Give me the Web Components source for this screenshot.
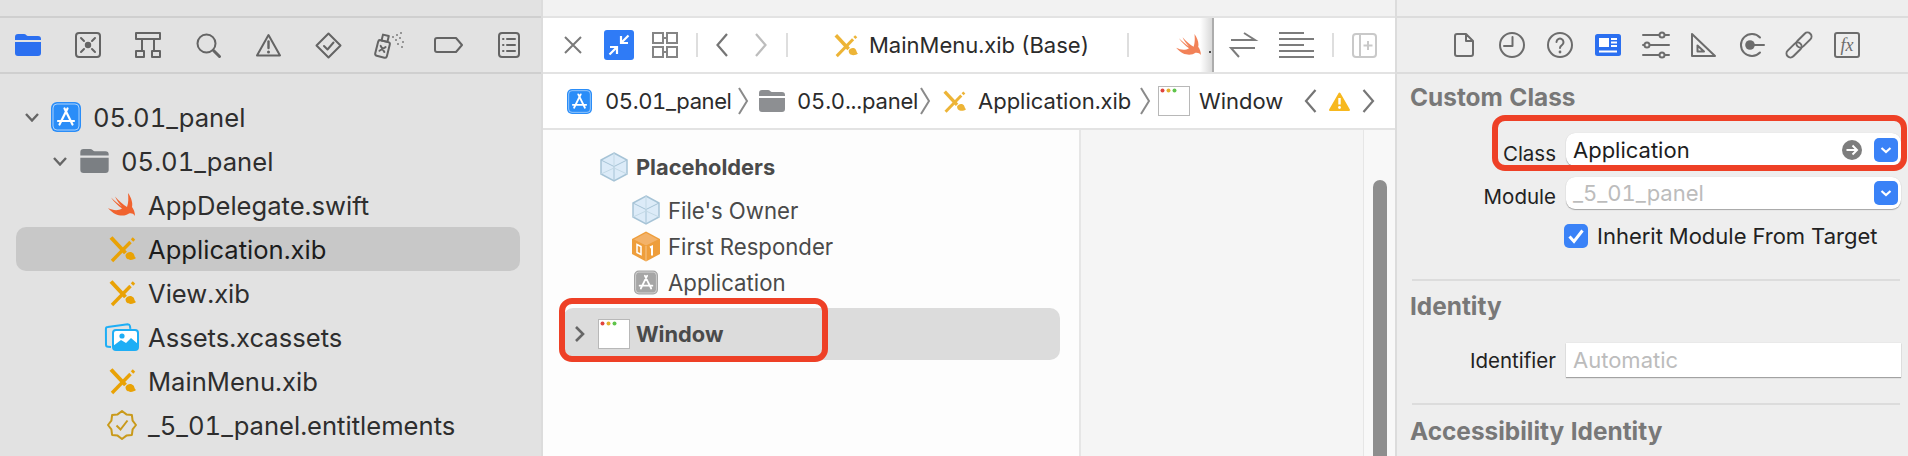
<!DOCTYPE html>
<html>
<head>
<meta charset="utf-8">
<title>Xcode</title>
<style>
  html, body { margin: 0; height: 456px; overflow: hidden; }
  body { display: flex; width: 1908px; font-family: Inter, "Liberation Sans", sans-serif; font-variant-numeric: tabular-nums; }
</style>
</head>
<body>
<xc-navigator>
  <xc-toolbar bg="#e2e2e2" line="#cfcfcf" columns="60.1" start="-2" style="color:#646464">
    <xc-icon name="folder"></xc-icon>
    <xc-icon name="symbols"></xc-icon>
    <xc-icon name="hierarchy"></xc-icon>
    <xc-icon name="search"></xc-icon>
    <xc-icon name="warning"></xc-icon>
    <xc-icon name="diamond"></xc-icon>
    <xc-icon name="spray"></xc-icon>
    <xc-icon name="label"></xc-icon>
    <xc-icon name="report"></xc-icon>
  </xc-toolbar>
  <xc-tree-row indent="9" box="30" gap="12" chevron="down"><xc-icon slot="icon" name="app"></xc-icon>05.01_panel</xc-tree-row>
  <xc-tree-row indent="37" box="30" gap="12" chevron="down"><xc-icon slot="icon" name="folder" w="29" h="24" color="#7b7f83"></xc-icon>05.01_panel</xc-tree-row>
  <xc-tree-row indent="92" box="28" gap="12"><xc-icon slot="icon" name="swift"></xc-icon>AppDelegate.swift</xc-tree-row>
  <xc-tree-row indent="92" box="28" gap="12" selected><xc-icon slot="icon" name="xib"></xc-icon>Application.xib</xc-tree-row>
  <xc-tree-row indent="92" box="28" gap="12"><xc-icon slot="icon" name="xib"></xc-icon>View.xib</xc-tree-row>
  <xc-tree-row indent="89" box="34" gap="9"><xc-icon slot="icon" name="assets"></xc-icon>Assets.xcassets</xc-tree-row>
  <xc-tree-row indent="92" box="28" gap="12"><xc-icon slot="icon" name="xib"></xc-icon>MainMenu.xib</xc-tree-row>
  <xc-tree-row indent="92" box="28" gap="12"><xc-icon slot="icon" name="badge"></xc-icon>_5_01_panel.entitlements</xc-tree-row>
</xc-navigator>

<xc-editor>
  <xc-toolbar bg="#fff" line="#e3e3e3">
    <xc-tab-strip>
      <xc-icon name="close" style="margin-left:21px"></xc-icon>
      <xc-icon name="collapse" style="margin-left:22px"></xc-icon>
      <xc-icon name="grid" style="margin-left:18px"></xc-icon>
      <xc-divider style="margin-left:18px"></xc-divider>
      <xc-icon name="back" style="margin-left:18px"></xc-icon>
      <xc-icon name="forward" style="margin-left:27px"></xc-icon>
      <xc-divider style="margin-left:19px"></xc-divider>
      <xc-icon name="xib" w="24" h="23" style="margin-left:46px;opacity:.8"></xc-icon>
      <span style="margin-left:11px">MainMenu.xib (Base)</span>
      <xc-divider style="margin-left:auto"></xc-divider>
      <xc-icon name="swift" w="26" h="22" style="margin-left:47px;opacity:.8"></xc-icon>
      <span style="width:2px;height:2px;margin:14px 1px 0 7px;background:#555"></span>
    </xc-tab-strip>
    <xc-icon name="swap" style="margin-left:16px"></xc-icon>
    <xc-icon name="lines" style="margin-left:23px"></xc-icon>
    <xc-divider style="margin-left:18px"></xc-divider>
    <xc-icon name="addpanel" style="margin-left:18px"></xc-icon>
  </xc-toolbar>
  <xc-jump-bar>
    <xc-icon name="app" w="25" h="25" style="margin-left:24px"></xc-icon>
    <span style="margin-left:13px;width:125px;letter-spacing:-.4px">05.01_panel</span>
    <xc-icon name="crumb" style="margin-left:8px"></xc-icon>
    <xc-icon name="folder" w="26" h="22" color="#8d8f92" style="margin-left:11px"></xc-icon>
    <span style="margin-left:12px;width:120px;letter-spacing:-.2px">05.0...panel</span>
    <xc-icon name="crumb" style="margin-left:3px"></xc-icon>
    <xc-icon name="xib" w="23" h="23" style="margin-left:13px;opacity:.8"></xc-icon>
    <span style="margin-left:12px;width:155px">Application.xib</span>
    <xc-icon name="crumb" style="margin-left:7px"></xc-icon>
    <xc-icon name="window" style="margin-left:8px"></xc-icon>
    <span style="margin-left:9px;width:82px">Window</span>
    <xc-icon name="back" w="13" h="24" style="margin-left:23px"></xc-icon>
    <xc-icon name="alert" style="margin-left:12px"></xc-icon>
    <xc-icon name="forward" w="13" h="24" color="#777" style="margin-left:12px"></xc-icon>
  </xc-jump-bar>
  <xc-outline>
    <xc-tree-row indent="37" box="28" gap="8" height="44" size="21.8" strong tone="#4a4a4a"><xc-icon slot="icon" name="cube"></xc-icon>Placeholders</xc-tree-row>
    <xc-tree-row indent="69" box="28" gap="8" height="36" size="22.2" tone="#4a4a4a" style="margin-top:3px"><xc-icon slot="icon" name="cube"></xc-icon>File's Owner</xc-tree-row>
    <xc-tree-row indent="69" box="28" gap="8" height="36" size="22.2" tone="#4a4a4a"><xc-icon slot="icon" name="cube1"></xc-icon>First Responder</xc-tree-row>
    <xc-tree-row indent="69" box="28" gap="8" height="36" size="22.2" tone="#4a4a4a"><xc-icon slot="icon" name="app" w="24" h="25" color="#a6a6a6"></xc-icon>Application</xc-tree-row>
    <xc-tree-row indent="11" box="32" gap="6" height="52" size="21.8" strong tone="#4a4a4a" hover chevron="right" style="margin-top:8px"><xc-icon slot="icon" name="window"></xc-icon>Window</xc-tree-row>
    <xc-highlight left="16" top="168" width="269" height="64"></xc-highlight>
  </xc-outline>
</xc-editor>

<xc-inspector>
  <xc-toolbar bg="#eee" line="#dcdcdc" columns="47.9" start="43" style="color:#6c6c6c">
    <xc-icon name="file"></xc-icon>
    <xc-icon name="clock"></xc-icon>
    <xc-icon name="help"></xc-icon>
    <xc-icon name="identity"></xc-icon>
    <xc-icon name="sliders"></xc-icon>
    <xc-icon name="ruler"></xc-icon>
    <xc-icon name="connect"></xc-icon>
    <xc-icon name="link"></xc-icon>
    <xc-icon name="fx"></xc-icon>
  </xc-toolbar>
  <xc-section heading="Custom Class" head="46" top="13" bottom="31">
    <xc-field label="Class" value="Application" height="33" offset="7">
      <xc-icon name="goto" style="margin-right:12px"></xc-icon>
      <xc-icon name="popup"></xc-icon>
    </xc-field>
    <xc-field label="Module" value="_5_01_panel" height="32" offset="7" muted style="margin-top:11px">
      <xc-icon name="popup"></xc-icon>
    </xc-field>
    <xc-check style="margin-top:15px">Inherit Module From Target</xc-check>
  </xc-section>
  <xc-section heading="Identity" head="50" top="12" bottom="26">
    <xc-field label="Identifier" value="Automatic" height="34" muted square></xc-field>
  </xc-section>
  <xc-section heading="Accessibility Identity" head="52" top="0" bottom="0"></xc-section>
  <xc-highlight left="95" top="115" width="415" height="56"></xc-highlight>
</xc-inspector>

<script>
var stroke = (body, width) => `<g fill="none" stroke="currentColor" stroke-width="${width || 2}" stroke-linecap="round" stroke-linejoin="round">${body}</g>`
var appMark = `<g fill="none" stroke="#fff" stroke-width="2.2" stroke-linecap="round"><path d="M13.5 6.5l8 16M16.5 6.5l-8 16M7 19h16"/></g>`

// scalloped seal used by the entitlements file
function sealPoints() {
  var pts = []
  for (var i = 0; i < 16; i++) {
    var r = i % 2 ? 11.5 : 14
    var a = Math.PI * i / 8 - Math.PI / 2
    pts.push((14 + r * Math.cos(a)).toFixed(1) + ',' + (15 + r * Math.sin(a)).toFixed(1))
  }
  return pts.join(' ')
}

var ICONS = {
  folder: [26, 22, '#2b6ff0', `<path fill="currentColor" d="M0 3a3 3 0 0 1 3-3h6c2 0 2.5 2 4 2h10a3 3 0 0 1 3 3v1H0zM0 8h26v11a3 3 0 0 1-3 3H3a3 3 0 0 1-3-3z"/>`],
  symbols: [26, 26, '', stroke(`<rect x="1" y="1" width="24" height="24" rx="3"/><path d="M6 6l3 3M20 6l-3 3M6 20l3-3M20 20l-3-3"/>`) + `<circle cx="13" cy="13" r="3.2" fill="currentColor"/>`],
  hierarchy: [26, 26, '', stroke(`<rect x="1" y="1" width="24" height="6"/><path d="M7 7v12M19 7v12"/><rect x="1" y="19" width="8" height="6"/><rect x="17" y="19" width="8" height="6"/>`)],
  search: [25, 25, '', stroke(`<circle cx="10.5" cy="10.5" r="9"/>`) + stroke(`<path d="M17.5 17.5l6 6"/>`, 3)],
  warning: [25, 24, '', stroke(`<path d="M12.5 2L24 22.5H1z"/>`) + stroke(`<path d="M12.5 8.5v6.5"/>`, 2.4) + `<circle cx="12.5" cy="19" r="1.5" fill="currentColor"/>`],
  diamond: [27, 27, '', stroke(`<path d="M13.5 1.5l12 12-12 12-12-12zM9 14l3.5 3.5 6-7"/>`)],
  spray: [30, 27, '', `<g transform="rotate(14 9 15)">` + stroke(`<rect x="3" y="9" width="12" height="16" rx="2"/><rect x="6" y="3" width="6" height="6"/><path d="M6.5 14.5l5 5M11.5 14.5l-5 5"/>`) + `</g><g fill="currentColor" opacity=".8"><circle cx="19" cy="5" r="1"/><circle cx="23" cy="3" r="1"/><circle cx="27" cy="1" r="1"/><circle cx="22" cy="8" r="1"/><circle cx="26" cy="6" r="1"/><circle cx="29" cy="10" r="1"/><circle cx="24" cy="12" r="1"/><circle cx="28" cy="15" r="1"/></g>`],
  label: [29, 16, '', stroke(`<path d="M3 1h19l6 7-6 7H3a2 2 0 0 1-2-2V3a2 2 0 0 1 2-2z"/>`)],
  report: [22, 26, '', stroke(`<rect x="1" y="1" width="20" height="24" rx="3"/><path d="M9 7h8M9 13h8M9 19h8M5 7h.5M5 13h.5M5 19h.5"/>`)],
  app: [30, 30, '#2a8df8', `<rect width="30" height="30" rx="6" fill="currentColor"/><rect x="2" y="2" width="26" height="26" rx="4" fill="none" stroke="#fff" stroke-opacity=".6"/>` + appMark],
  swift: [28, 24, '', `<path fill="#f0632f" d="M20 0c3.500 5 5 10 4 14 1.500 2 3 5 3 9-1.500-2.500-4-3-6-2.500C17 23.500 8 24.500 0 15c5 2.500 10 3 14 .5-4-3-8-6.500-11-11 4 4 8 7 11 9-3-3-5.500-6.500-7-10 4 4.500 8 8 12 10.500 1.500-4 1.500-9 1-14z"/>`],
  xib: [27, 26, '', `<path d="M2 1.500l14.500 15.500" stroke="#e9a205" stroke-width="4" fill="none"/><path fill="#e9a205" d="M16.500 19c1.500-3.500 6-4 8-1.500 1 1.300.8 3.500 2.500 4.500-2.500 2.500-10.500 3.500-10.500-3z"/><path d="M3 25L21.500 6" stroke="#e9a205" stroke-width="3.400" fill="none"/><path d="M23 4.500l2-2" stroke="#e9a205" stroke-width="3.400"/>`],
  assets: [34, 28, '', `<g fill="none" stroke="#1eaef5" stroke-width="2"><path d="M6 24l-3-.2c-1.200 0-2-1-2-2L.9 6c0-1 .6-1.800 1.800-1.900l20-2.900c1.200 0 2 .6 2.200 1.700l.5 3"/></g><rect x="8" y="7" width="25" height="20" rx="3" fill="#fff" stroke="#1eaef5" stroke-width="2"/><path fill="#1eaef5" d="M8 23l8-6 5 3 5-5 7 6v3a3 3 0 0 1-3 3H11a3 3 0 0 1-3-3z"/><circle cx="17" cy="13" r="2.600" fill="#1eaef5"/>`],
  badge: [28, 30, '', `<polygon points="${sealPoints()}" fill="none" stroke="#c99a1b" stroke-width="2" stroke-linejoin="round"/><path d="M8.500 15.500l4 4 7-9" fill="none" stroke="#c99a1b" stroke-width="2"/>`],
  close: [18, 18, '', `<path d="M1 1l16 16M17 1L1 17" stroke="#7a7a7a" stroke-width="2"/>`],
  collapse: [30, 30, '', `<rect width="30" height="30" rx="3" fill="#2f7bf6"/><g fill="none" stroke="#fff" stroke-width="2.200"><path d="M17 6v7h7M24.500 5.500L17 13M13 24v-7H6M5.500 24.500L13 17"/></g>`],
  grid: [26, 26, '', `<g fill="none" stroke="#858585" stroke-width="2"><rect x="1" y="1" width="10" height="10"/><rect x="15" y="1" width="10" height="10"/><rect x="1" y="15" width="10" height="10"/><rect x="15" y="15" width="10" height="10"/><path d="M11 6h4M11 20h4"/></g>`],
  back: [12, 24, '', `<path d="M11 1L1.500 12l9.500 11" fill="none" stroke="#757575" stroke-width="2.200"/>`],
  forward: [12, 24, '#bdbdbd', `<path d="M1 1l9.500 11L1 23" fill="none" stroke="currentColor" stroke-width="2.200"/>`],
  swap: [26, 26, '', `<path d="M1 8h24L14 1M25 16H1l8 9" fill="none" stroke="#7c7c7c" stroke-width="2"/>`],
  lines: [35, 26, '', `<path d="M0 1h25M0 7h35M0 13h25M0 19h35M0 25h35" stroke="#7c7c7c" stroke-width="2"/>`],
  addpanel: [25, 25, '', `<g fill="none" stroke="#c9c9c9" stroke-width="2"><rect x="1" y="1" width="23" height="23" rx="3"/><path d="M8 1v23M16 8v9M11.500 12.500h9"/></g>`],
  crumb: [10, 28, '', `<path d="M1 1l8 13-8 13" fill="none" stroke="#8a8a8a" stroke-width="2"/>`],
  window: [32, 30, '', `<rect x=".5" y=".5" width="31" height="29" fill="#fff" stroke="#b8b8b8"/><circle cx="4.500" cy="4.500" r="2" fill="#e0443e"/><circle cx="10.500" cy="4.500" r="2" fill="#e2b22e"/><circle cx="16.500" cy="4.500" r="2" fill="#5fc44b"/>`],
  alert: [21, 19, '', `<path fill="#f7b81e" stroke="#f7b81e" stroke-width="2" stroke-linejoin="round" d="M10.500 1.500L20 18H1z"/><path d="M10.500 6v6.500" stroke="#fff" stroke-width="2.400"/><circle cx="10.500" cy="15.500" r="1.400" fill="#fff"/>`],
  cube: [28, 30, '', `<path d="M14 1l13 7v14l-13 7-13-7V8z" fill="#dcebf8" stroke="#a6c3d6" stroke-width="1.500"/><path d="M1 8l13 6.500L27 8M14 14.500V29" fill="none" stroke="#a6c3d6" stroke-width="1"/><path d="M1 22l13-6 13 6M14 1v15" fill="none" stroke="#c3d9e6" stroke-width="1"/>`],
  cube1: [28, 31, '', `<path d="M14 .5l14 7.500v15l-14 7.500L0 23V8z" fill="#ee9e3c"/><path d="M14 2l12 6.500-12 6-12-6z" fill="#f3b269"/><path d="M14 15v15" stroke="#f6c48a"/><path d="M5 13.500l4 2v8l-4-2z" fill="none" stroke="#fff" stroke-width="1.500"/><path d="M18 16.500l2-1v9" fill="none" stroke="#fff" stroke-width="2"/>`],
  file: [20, 24, '', stroke(`<path d="M3 1h9l7 7v13a2 2 0 0 1-2 2H3a2 2 0 0 1-2-2V3a2 2 0 0 1 2-2zM12 1v7h7"/>`)],
  clock: [26, 26, '', stroke(`<circle cx="13" cy="13" r="12"/><path d="M13.500 5v9H5"/>`)],
  help: [26, 26, '', stroke(`<circle cx="13" cy="13" r="12"/><path d="M9.500 10a3.500 3.500 0 1 1 5.500 3c-1.200.9-2 1.500-2 3"/>`) + `<circle cx="13" cy="20" r="1.400" fill="currentColor"/>`],
  identity: [26, 22, '', `<rect width="26" height="22" rx="2.500" fill="#2b6ff0"/><rect x="4" y="4" width="10" height="9" fill="#fff"/><path d="M16 5h6M16 8.500h6M16 12h6M4 17.500h18" stroke="#fff" stroke-width="2"/>`],
  sliders: [26, 24, '', stroke(`<path d="M0 2h26M0 12h26M0 22h26"/>`) + `<g fill="#eee" stroke="currentColor" stroke-width="2"><circle cx="19" cy="2" r="2.500"/><circle cx="4" cy="12" r="2.500"/><circle cx="19" cy="22" r="2.500"/></g>`],
  ruler: [25, 24, '', stroke(`<path d="M1 1v22h23zM6.500 12.500v6h6.500z"/>`)],
  connect: [26, 24, '', stroke(`<path d="M22 4.500a11 11 0 1 0 0 15M12 12h14"/>`) + `<circle cx="12" cy="12" r="4.800" fill="currentColor"/>`],
  link: [26, 26, '', stroke(`<g transform="rotate(-45 13 13)"><rect x="-3" y="9" width="18" height="8" rx="4"/><rect x="11" y="9" width="18" height="8" rx="4"/></g>`)],
  fx: [26, 26, '', stroke(`<rect x="1" y="1" width="24" height="24" rx="2"/>`) + `<text x="13" y="19" text-anchor="middle" font-family="Liberation Serif" font-style="italic" font-size="18" fill="currentColor">fx</text>`],
  goto: [20, 20, '', `<circle cx="10" cy="10" r="10" fill="#7d7d7d"/><path d="M4.500 10h10M10.500 5.500l4.500 4.500-4.500 4.500" fill="none" stroke="#fff" stroke-width="2"/>`],
  popup: [24, 24, '', `<rect width="24" height="24" rx="5" fill="#3a82f7"/><path d="M7.500 10l4.500 4 4.500-4" fill="none" stroke="#fff" stroke-width="2.200"/>`]
}

class XcIcon extends HTMLElement {
  constructor() {
    super()
    this.attachShadow({ mode: 'open' })
  }
  connectedCallback() {
    var icon = ICONS[this.getAttribute('name')]
    var w = this.getAttribute('w') || icon[0]
    var h = this.getAttribute('h') || icon[1]
    var color = this.getAttribute('color') || icon[2]
    this.shadowRoot.innerHTML = `
      <style>
        :host { display: block; flex: none; line-height: 0; ${color ? 'color:' + color + ';' : ''} }
        svg { display: block; overflow: visible; }
      </style>
      <svg width="${w}" height="${h}" viewBox="0 0 ${icon[0]} ${icon[1]}">${icon[3]}</svg>`
  }
}

class XcToolbar extends HTMLElement {
  constructor() {
    super()
    this.attachShadow({ mode: 'open' })
  }
  connectedCallback() {
    var columns = this.getAttribute('columns')
    var layout = columns
      ? `display: grid; grid-template-columns: repeat(9, ${columns}px); justify-items: center; align-items: center; margin-left: ${this.getAttribute('start')}px;`
      : 'display: flex; align-items: center;'
    this.shadowRoot.innerHTML = `
      <style>
        :host { display: block; flex: none; background: ${this.getAttribute('bg')}; }
        .strip { height: 16px; }
        .bar { ${layout} height: 54px; }
        .wrap { border-top: 2px solid ${this.getAttribute('line')}; border-bottom: 2px solid ${this.getAttribute('line')}; overflow: hidden; }
      </style>
      <div class="strip" style="background:${this.getAttribute('bg') === '#fff' ? '#f2f2f2' : 'transparent'}"></div>
      <div class="wrap"><div class="bar"><slot></slot></div></div>`
  }
}

class XcDivider extends HTMLElement {
  constructor() {
    super()
    this.attachShadow({ mode: 'open' }).innerHTML = `
      <style>:host { display: block; flex: none; width: 2px; height: 24px; background: #dedede; }</style>`
  }
}

class XcTabStrip extends HTMLElement {
  constructor() {
    super()
    this.attachShadow({ mode: 'open' }).innerHTML = `
      <style>
        :host {
          display: flex; align-items: center; flex: none; position: relative;
          box-sizing: border-box; width: 671px; height: 54px;
          border-right: 2px solid #adadad;
          font-size: 22px; color: #2b2b2b;
        }
        :host::after {
          content: ''; position: absolute; right: 0; top: 0; bottom: 0; width: 12px;
          background: linear-gradient(to right, rgba(0,0,0,0), rgba(0,0,0,.15));
        }
      </style>
      <slot></slot>`
  }
}

class XcJumpBar extends HTMLElement {
  constructor() {
    super()
    this.attachShadow({ mode: 'open' }).innerHTML = `
      <style>
        :host {
          display: flex; align-items: center; flex: none; height: 54px;
          border-bottom: 2px solid #e3e3e3; background: #fff;
          font-size: 22px; color: #2b2b2b; white-space: nowrap;
        }
      </style>
      <slot></slot>`
  }
}

class XcTreeRow extends HTMLElement {
  constructor() {
    super()
    this.attachShadow({ mode: 'open' })
  }
  connectedCallback() {
    var indent = this.getAttribute('indent')
    var chevron = this.getAttribute('chevron')
    var chev = ''
    if (chevron === 'down') chev = `<svg class="chev" width="14" height="9" viewBox="0 0 14 9"><path d="M1 1l6 6.500L13 1" fill="none" stroke="#666" stroke-width="2.400"/></svg>`
    if (chevron === 'right') chev = `<svg class="chev" width="12" height="16" viewBox="0 0 12 16"><path d="M2 1l7 7-7 7" fill="none" stroke="#666" stroke-width="2.600"/></svg>`
    this.shadowRoot.innerHTML = `
      <style>
        :host {
          display: flex; align-items: center; flex: none;
          height: ${this.getAttribute('height') || 44}px;
          padding-left: ${indent}px; border-radius: 10px;
          font-size: ${this.getAttribute('size') || 25.6}px;
          font-weight: ${this.hasAttribute('strong') ? 700 : 400};
          color: ${this.getAttribute('tone') || '#2e2e2e'};
          white-space: nowrap;
        }
        :host([selected]) { background: #c8c8c8; color: #1c1c1c; }
        :host([hover]) { background: #dcdcdc; }
        .chev { flex: none; margin-right: 12px; }
        .box {
          display: flex; align-items: center; justify-content: center; flex: none;
          width: ${this.getAttribute('box')}px; margin-right: ${this.getAttribute('gap')}px;
        }
      </style>
      ${chev}
      <div class="box"><slot name="icon"></slot></div>
      <slot></slot>`
  }
}

class XcNavigator extends HTMLElement {
  constructor() {
    super()
    this.attachShadow({ mode: 'open' }).innerHTML = `
      <style>
        :host {
          display: flex; flex-direction: column; flex: none;
          width: 541px; height: 456px; overflow: hidden; background: #e2e2e2;
        }
        ::slotted(xc-toolbar) { margin-bottom: 21px; }
        ::slotted(xc-tree-row) { margin: 0 21px 0 16px; }
      </style>
      <slot></slot>`
  }
}

class XcEditor extends HTMLElement {
  constructor() {
    super()
    this.attachShadow({ mode: 'open' }).innerHTML = `
      <style>
        :host {
          display: flex; flex-direction: column; flex: none; box-sizing: border-box;
          width: 854px; height: 456px; overflow: hidden; border-left: 2px solid #dcdcdc; background: #fff;
        }
      </style>
      <slot></slot>`
  }
}

class XcOutline extends HTMLElement {
  constructor() {
    super()
    this.attachShadow({ mode: 'open' }).innerHTML = `
      <style>
        :host { display: flex; flex: 1; min-height: 0; overflow: hidden; background: #f5f5f5; }
        .list {
          position: relative; display: flex; flex-direction: column; box-sizing: border-box;
          width: 538px; padding: 15px 19px 0 20px; background: #fdfdfd;
          border-right: 2px solid #e6e6e6;
        }
        .canvas { flex: 1; }
        .scroller {
          flex: none; box-sizing: border-box; width: 32px; padding: 50px 8px 0 9px;
          border-left: 1px solid #e6e6e6; background: #f8f8f8;
        }
        .thumb { height: 276px; border-radius: 8px 8px 0 0; background: #8e8e8e; }
      </style>
      <div class="list"><slot></slot></div>
      <div class="canvas"></div>
      <div class="scroller"><div class="thumb"></div></div>`
  }
}

class XcHighlight extends HTMLElement {
  constructor() {
    super()
    this.attachShadow({ mode: 'open' })
  }
  connectedCallback() {
    this.shadowRoot.innerHTML = `
      <style>
        :host {
          position: absolute; box-sizing: border-box; pointer-events: none;
          left: ${this.getAttribute('left')}px; top: ${this.getAttribute('top')}px;
          width: ${this.getAttribute('width')}px; height: ${this.getAttribute('height')}px;
          border: 6px solid #ee4026; border-radius: 13px;
        }
      </style>`
  }
}

class XcInspector extends HTMLElement {
  constructor() {
    super()
    this.attachShadow({ mode: 'open' }).innerHTML = `
      <style>
        :host {
          display: flex; flex-direction: column; position: relative; flex: none; box-sizing: border-box;
          width: 513px; height: 456px; overflow: hidden; border-left: 2px solid #dcdcdc; background: #eee;
        }
      </style>
      <slot></slot>`
  }
}

class XcSection extends HTMLElement {
  constructor() {
    super()
    this.attachShadow({ mode: 'open' })
  }
  connectedCallback() {
    var divider = this.nextElementSibling && this.nextElementSibling.localName === 'xc-section'
    this.shadowRoot.innerHTML = `
      <style>
        :host { display: block; flex: none; margin: 0 8px 0 15px; ${divider ? 'border-bottom: 2px solid #dcdcdc;' : ''} padding-bottom: ${this.getAttribute('bottom')}px; }
        h2 {
          margin: 0 0 ${this.getAttribute('top')}px -2px; height: ${this.getAttribute('head')}px;
          display: flex; align-items: center;
          font-size: 24.400px; font-weight: 700; color: #787878; white-space: nowrap;
        }
        .body { display: flex; flex-direction: column; margin-left: -15px; margin-right: -1px; }
      </style>
      <h2>${this.getAttribute('heading')}</h2>
      <div class="body"><slot></slot></div>`
  }
}

class XcField extends HTMLElement {
  constructor() {
    super()
    this.attachShadow({ mode: 'open' })
  }
  connectedCallback() {
    this.shadowRoot.innerHTML = `
      <style>
        :host { display: flex; align-items: center; flex: none; font-size: 20.500px; color: #222; }
        .label {
          flex: none; box-sizing: border-box; width: 159px; margin-right: 10px; text-align: right;
          padding-top: ${this.getAttribute('offset') || 0}px; white-space: nowrap;
        }
        .box {
          flex: 1; display: flex; align-items: center; box-sizing: border-box;
          height: ${this.getAttribute('height')}px; padding: 0 3px 0 7px;
          background: #fff; border-radius: ${this.hasAttribute('square') ? 0 : 9}px;
          box-shadow: 0 1px 1px rgba(0,0,0,.3), 0 0 1px rgba(0,0,0,.12);
          font-size: 22px; color: ${this.hasAttribute('muted') ? '#bcbcbc' : '#1d1d1d'};
        }
        .value { flex: 1; white-space: nowrap; }
      </style>
      <div class="label">${this.getAttribute('label')}</div>
      <div class="box"><span class="value">${this.getAttribute('value')}</span><slot></slot></div>`
  }
}

class XcCheck extends HTMLElement {
  constructor() {
    super()
    this.attachShadow({ mode: 'open' }).innerHTML = `
      <style>
        :host { display: flex; align-items: center; flex: none; height: 24px; padding-left: 167px; font-size: 22px; color: #222; white-space: nowrap; }
        svg { flex: none; margin-right: 9px; }
      </style>
      <svg width="24" height="24" viewBox="0 0 24 24"><rect width="24" height="24" rx="5" fill="#3a82f7"/><path d="M5.500 12.500l4.500 5 8.500-11" fill="none" stroke="#fff" stroke-width="3"/></svg>
      <slot></slot>`
  }
}

customElements.define('xc-icon', XcIcon)
customElements.define('xc-toolbar', XcToolbar)
customElements.define('xc-divider', XcDivider)
customElements.define('xc-tab-strip', XcTabStrip)
customElements.define('xc-jump-bar', XcJumpBar)
customElements.define('xc-tree-row', XcTreeRow)
customElements.define('xc-navigator', XcNavigator)
customElements.define('xc-editor', XcEditor)
customElements.define('xc-outline', XcOutline)
customElements.define('xc-highlight', XcHighlight)
customElements.define('xc-inspector', XcInspector)
customElements.define('xc-section', XcSection)
customElements.define('xc-field', XcField)
customElements.define('xc-check', XcCheck)
</script>
</body>
</html>
